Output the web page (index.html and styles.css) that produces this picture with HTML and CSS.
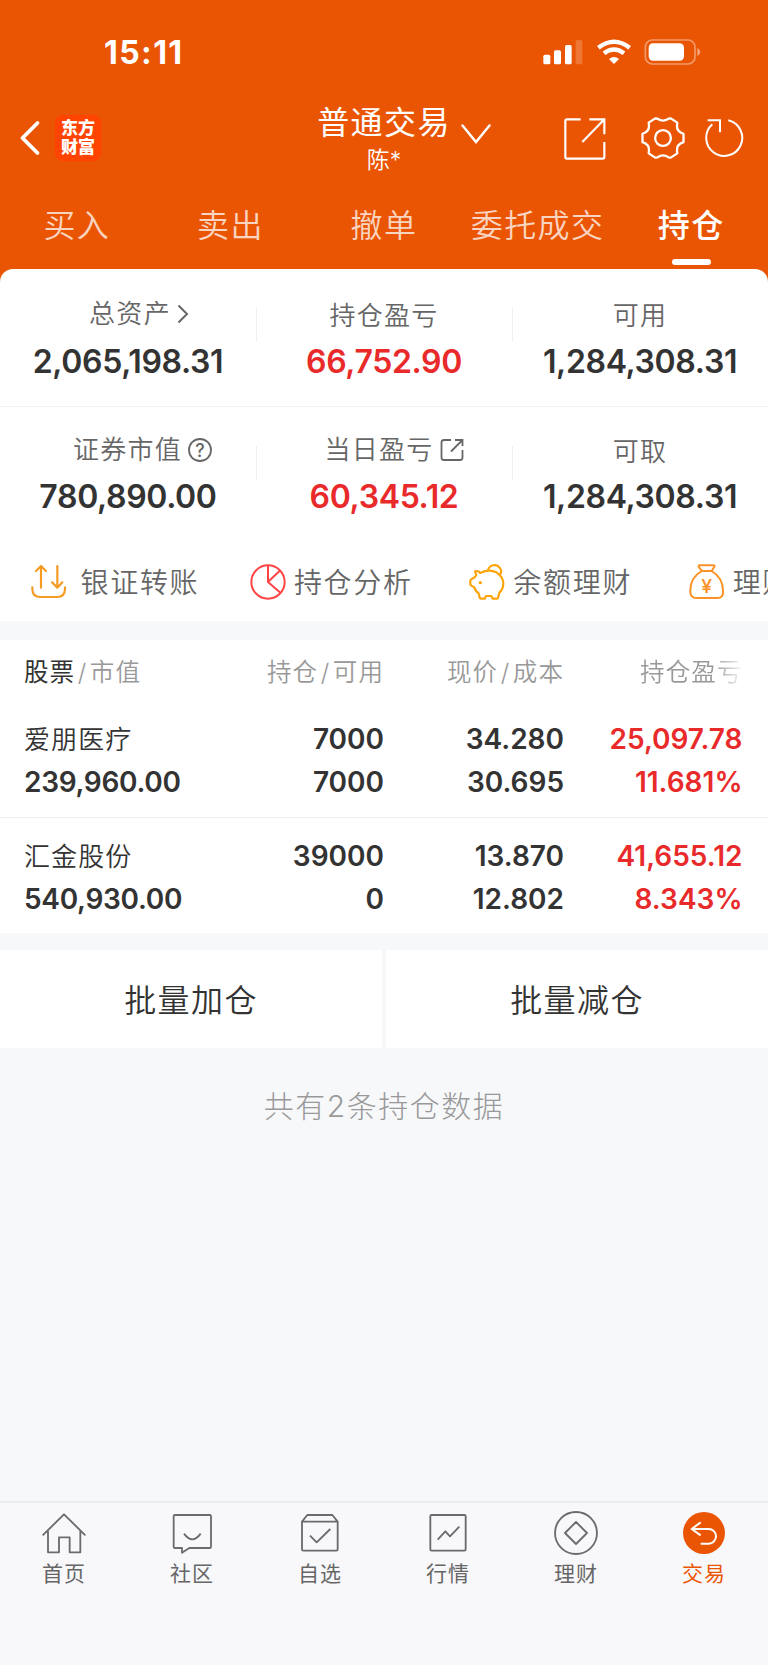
FILE: index.html
```
<!DOCTYPE html>
<html lang="zh-CN">
<head>
    <meta charset="UTF-8">
    <meta name="viewport" content="width=device-width, initial-scale=1.0">
    <title>普通交易 - 持仓</title>
    <link rel="stylesheet" href="styles.css">
</head>
<body>
    <div class="top">
        <!-- status bar -->
        <div class="status">
            <span class="time">15:11</span>
            <div class="status-icons">
                <svg width="40" height="26" viewBox="0 0 120 78" fill="#fff">
                    <rect x="1" y="47" width="21" height="29" rx="5"/>
                    <rect x="33" y="34" width="21" height="42" rx="5"/>
                    <rect x="66" y="18" width="20" height="58" rx="5"/>
                    <rect x="98" y="3" width="20" height="73" rx="5" opacity=".2"/>
                </svg>
                <svg class="wifi" width="36" height="26" viewBox="0 0 108 78" fill="none" stroke="#fff" stroke-width="13">
                    <path d="M7 26Q54 -10 101 26"/>
                    <path d="M24 43Q54 20 84 43"/>
                    <path d="M39 60Q54 48 69 60L54 75Z" fill="#fff" stroke="none"/>
                </svg>
                <svg class="battery" width="57" height="26" viewBox="0 0 171 78">
                    <rect x="4" y="3" width="149" height="72" rx="21" fill="none" stroke="#fff" stroke-width="5" opacity=".4"/>
                    <rect x="14" y="13" width="106" height="52" rx="13" fill="#fff"/>
                    <path d="M160 26Q169 31 169 39T160 52Z" fill="#fff" opacity=".45"/>
                </svg>
            </div>
        </div>

        <!-- title bar -->
        <div class="navbar">
            <svg class="back" width="22" height="36" viewBox="0 0 22 36" fill="none" stroke="#fff" stroke-width="3.8" stroke-linecap="round" stroke-linejoin="round">
                <path d="M18.500 3L3.500 18L18.500 33"/>
            </svg>
            <div class="logo">东方<br>财富</div>
            <div class="title">
                <div class="title-main">普通交易</div>
                <div class="title-sub">陈*</div>
            </div>
            <svg class="down" width="30" height="20" viewBox="0 0 30 20" fill="none" stroke="#fff" stroke-width="2.400" stroke-linecap="round">
                <path d="M1.500 1.500L15 18L28.500 1.500"/>
            </svg>
            <div class="nav-icons">
                <svg width="44" height="44" viewBox="0 0 132 132" fill="none" stroke="#fff" stroke-width="6.500">
                    <path d="M53 10H12Q7 10 7 15V123Q7 128 12 128H119Q124 128 124 123V78M124 55V10H79M122 12L58 78"/>
                </svg>
                <svg class="gear" width="44" height="44" viewBox="-22 -22 44 44" fill="none" stroke="#fff" stroke-width="2.300" stroke-linejoin="round">
                    <path d="M20.500 4.200Q13.500 6.500 14 12.500L14.300 15.400L7.800 19.600L5.500 19.300Q0 15.500 -5.500 19.300L-7.800 19.600L-14.300 15.400L-14 12.500Q-13.500 6.500 -20.500 4.200V-4.200Q-13.500 -6.500 -14 -12.500L-14.300 -15.400L-7.800 -19.600L-5.500 -19.300Q0 -15.500 5.500 -19.300L7.800 -19.600L14.300 -15.400L14 -12.500Q13.500 -6.500 20.500 -4.200Z"/>
                    <circle r="7.900"/>
                </svg>
                <svg class="refresh" width="44" height="44" viewBox="0 0 132 132" fill="none" stroke="#fff" stroke-width="6">
                    <path d="M79 13A54 54 0 1 1 31 25"/>
                    <path d="M17 13H54V49"/>
                </svg>
            </div>
        </div>

        <div class="tabs">
            <div class="tab">买入</div>
            <div class="tab">卖出</div>
            <div class="tab">撤单</div>
            <div class="tab">委托成交</div>
            <div class="tab active">持仓</div>
        </div>

        <!-- assets -->
        <div class="assets">
            <div class="asset-row">
                <div class="asset">
                    <div class="label with-icon total">总资产<svg width="12" height="20" viewBox="0 0 12 20" fill="none" stroke="#666" stroke-width="2"><path d="M1.500 1.500L10 10L1.500 18.500"/></svg></div>
                    <div class="value">2,065,198.31</div>
                </div>
                <div class="asset">
                    <div class="label">持仓盈亏</div>
                    <div class="value red">66,752.90</div>
                </div>
                <div class="asset">
                    <div class="label">可用</div>
                    <div class="value">1,284,308.31</div>
                </div>
            </div>
            <div class="asset-row second">
                <div class="asset">
                    <div class="label with-icon market">证券市值<svg width="24" height="24" viewBox="0 0 24 24"><circle cx="12" cy="12" r="11" fill="none" stroke="#666" stroke-width="1.800"/><text class="qmark" x="12" y="18.500">?</text></svg></div>
                    <div class="value">780,890.00</div>
                </div>
                <div class="asset">
                    <div class="label with-icon daily">当日盈亏<svg width="24" height="24" viewBox="0 0 24 24" fill="none" stroke="#666" stroke-width="1.800"><path d="M11 2H4Q1.500 2 1.500 4.500V19.500Q1.500 22 4 22H20Q22.500 22 22.500 19.500V12M15 2H22.500V8M22 2.500L11 13.500"/></svg></div>
                    <div class="value red">60,345.12</div>
                </div>
                <div class="asset">
                    <div class="label">可取</div>
                    <div class="value">1,284,308.31</div>
                </div>
            </div>
            <div class="actions">
                <div class="action transfer">
                    <svg width="36" height="36" viewBox="0 0 108 108" fill="none" stroke="#f59a23" stroke-width="6.500" stroke-linecap="round" stroke-linejoin="round">
                        <path d="M30 71V6M15 21L30 6L45 21M79 6V70M63 55L79 71L94 55M4 70V74Q4 99 28 99H78Q102 99 102 74V70"/>
                    </svg>
                    <span>银证转账</span>
                </div>
                <div class="action">
                    <svg width="36" height="36" viewBox="0 0 108 108" fill="none" stroke="#ff4446" stroke-width="6" stroke-linejoin="round">
                        <circle cx="54" cy="54" r="50"/>
                        <path d="M54 4V54L91 19M54 54L93 88"/>
                    </svg>
                    <span>持仓分析</span>
                </div>
                <div class="action">
                    <svg width="36" height="36" viewBox="0 0 108 108" fill="none" stroke="#ffa408" stroke-width="6.500" stroke-linejoin="round">
                        <path d="M57 20C60 2 82 -2 92 11C99 20 96 29 91 34"/>
                        <path d="M18 22Q29 20 34 27Q60 14 82 25Q103 38 103 59Q102 77 91 86L87 102Q86 104 83 104H71L67 96H51L47 104H36Q33 104 32 101L29 88Q20 83 16 70L7 65Q4 63 4 60V50Q4 47 7 46L18 39L22 33Z"/>
                        <circle cx="34" cy="56" r="5" fill="#ffa408" stroke="none"/>
                    </svg>
                    <span>余额理财</span>
                </div>
                <div class="action">
                    <svg width="36" height="36" viewBox="0 0 108 108" fill="none" stroke="#fb9226" stroke-width="6" stroke-linejoin="round">
                        <path d="M32 4H74Q78 4 76 8L68 21H38L29 8Q28 4 32 4ZM38 21C10 37 3 60 4 85Q5 102 22 102H86Q102 102 102 85C103 60 95 37 68 21"/>
                        <text class="yen" x="53" y="87">¥</text>
                    </svg>
                    <span>理财</span>
                </div>
            </div>
        </div>
    </div>

    <!-- positions -->
    <div class="positions">
        <div class="grid-row head">
            <div><b>股票</b><i>/</i>市值</div>
            <div>持仓<i>/</i>可用</div>
            <div>现价<i>/</i>成本</div>
            <div class="fade">持仓盈亏</div>
        </div>
        <div class="grid-row stock">
            <div><span class="name">爱朋医疗</span>239,960.00</div>
            <div>7000<br>7000</div>
            <div>34.280<br>30.695</div>
            <div class="red">25,097.78<br>11.681%</div>
        </div>
        <div class="grid-row stock last">
            <div><span class="name">汇金股份</span>540,930.00</div>
            <div>39000<br>0</div>
            <div>13.870<br>12.802</div>
            <div class="red">41,655.12<br>8.343%</div>
        </div>
    </div>

    <div class="batch">
        <div class="batch-btn">批量加仓</div>
        <div class="batch-btn">批量减仓</div>
    </div>
    <div class="summary">共有2条持仓数据</div>

    <!-- bottom tabbar -->
    <div class="tabbar">
        <div class="tabbar-item">
            <svg width="44" height="44" viewBox="0 0 132 132"><path d="M2 73L66 10L130 73M18 60V124H51V79H83V124H115V60"/></svg>
            <span>首页</span>
        </div>
        <div class="tabbar-item">
            <svg width="44" height="44" viewBox="0 0 132 132"><path d="M36 111H15Q11 111 11 107V16Q11 12 15 12H119Q123 12 123 16V107Q123 111 119 111H58L36 125ZM42 68Q67 102 92 68"/></svg>
            <span>社区</span>
        </div>
        <div class="tabbar-item">
            <svg width="44" height="44" viewBox="0 0 132 132"><path d="M12 32L28 12H103L119 32V115Q119 119 115 119H16Q12 119 12 115ZM12 32H119M36 74L56 94L97 54"/></svg>
            <span>自选</span>
        </div>
        <div class="tabbar-item">
            <svg width="44" height="44" viewBox="0 0 132 132"><rect x="13" y="12" width="106" height="107" rx="4"/><path d="M35 86L58 61L72 76L100 47"/></svg>
            <span>行情</span>
        </div>
        <div class="tabbar-item">
            <svg width="44" height="44" viewBox="0 0 132 132"><circle cx="66" cy="66" r="63"/><path d="M66 33L99 66L66 99L33 66Z"/></svg>
            <span>理财</span>
        </div>
        <div class="tabbar-item current">
            <svg width="44" height="44" viewBox="0 0 132 132"><circle class="disc" cx="66" cy="66" r="63"/><path d="M56 34L29 54L56 73M29 54H80A22 22 0 0 1 80 98H56"/></svg>
            <span>交易</span>
        </div>
    </div>
</body>
</html>
```
FILE: styles.css
```
* {
    box-sizing: border-box;
}
body {
    margin: 0;
    width: 768px;
    height: 1665px;
    display: flex;
    flex-direction: column;
    overflow: hidden;
    background-color: #f7f8fa;
    color: #333;
    font-family: Inter, "Noto Sans CJK SC", sans-serif;
}
svg {
    display: block;
    flex: none;
}
.red {
    color: #e92a2b;
}
.top {
    background-color: #ea5504;
}

/* status bar */
.status {
    display: flex;
    justify-content: space-between;
    height: 96px;
    padding: 33px 67px 0 104px;
    color: #fff;
}
.time {
    font-size: 32px;
    font-weight: 750;
    letter-spacing: 1.4px;
    line-height: 40px;
}
.status-icons {
    display: flex;
    margin-top: 6px;
}
.wifi {
    margin-left: 13px;
}
.battery {
    margin-left: 12px;
}

/* title bar */
.navbar {
    display: flex;
    align-items: center;
    height: 84px;
    padding: 0 22px 0 19px;
    color: #fff;
}
.logo {
    width: 46px;
    height: 46px;
    margin-left: 14px;
    padding-top: 4px;
    border-radius: 8px;
    background-color: #ff4300;
    font-size: 17px;
    font-weight: 900;
    line-height: 19px;
    text-align: center;
}
.title {
    width: 134px;
    margin-left: 216px;
    padding-top: 2px;
    text-align: center;
}
.title-main {
    font-size: 32px;
    letter-spacing: 1.4px;
    line-height: 40px;
    white-space: nowrap;
}
.title-sub {
    margin-top: 2px;
    font-size: 23px;
    font-weight: 350;
    line-height: 30px;
}
.down {
    margin-left: 10px;
    margin-top: -8px;
}
.nav-icons {
    display: flex;
    margin-left: auto;
}
.gear {
    margin-left: 34px;
}
.refresh {
    margin-left: 17px;
}

.tabs {
    display: flex;
    height: 89px;
    padding-top: 21px;
}
.tab {
    flex: 1;
    color: rgba(255, 255, 255, 0.75);
    font-size: 32px;
    font-weight: 350;
    letter-spacing: 1.4px;
    line-height: 50px;
    text-align: center;
    white-space: nowrap;
}
.tab.active {
    color: #fff;
    font-weight: 500;
}
.tab.active::after {
    content: "";
    display: block;
    width: 39px;
    height: 6px;
    margin: 8px auto 0;
    border-radius: 3px;
    background-color: #fff;
}

/* assets */
.assets {
    border-radius: 13px 13px 0 0;
    background-color: #fff;
}
.asset-row {
    display: flex;
    height: 138px;
    border-bottom: 1px solid #f2f2f4;
}
.asset {
    flex: 1;
    padding-top: 29px;
    text-align: center;
}
.asset + .asset {
    background: linear-gradient(#f0f0f2, #f0f0f2) no-repeat 0 39px / 1px 34px;
}
.asset-row.second {
    height: 136px;
    border-bottom: none;
}
.second .asset {
    padding-top: 27px;
}
.label {
    height: 36px;
    margin-bottom: 8px;
    color: #666;
    font-size: 26px;
    font-weight: 350;
    letter-spacing: 1.3px;
    line-height: 36px;
}
.label.with-icon {
    display: flex;
    align-items: center;
    justify-content: center;
    margin-top: -2px;
    margin-bottom: 10px;
}
.total {
    padding-left: 22px;
}
.total svg {
    margin-left: 6px;
}
.market {
    padding-left: 29px;
}
.market svg {
    margin-left: 6px;
}
.daily {
    padding-left: 20px;
}
.daily svg {
    margin-left: 6px;
}
.qmark {
    fill: #666;
    font-size: 18px;
    font-weight: 500;
    text-anchor: middle;
    letter-spacing: 0;
}
.value {
    font-size: 32px;
    font-weight: 600;
    letter-spacing: -0.35px;
    line-height: 40px;
}
.second .label {
    margin-bottom: 7px;
}
.second .label.with-icon {
    margin-bottom: 9px;
}

.actions {
    display: flex;
    height: 78px;
    overflow: hidden;
}
.action {
    display: flex;
    flex: 0 0 219.4px;
    align-items: center;
    padding-left: 30.5px;
    color: #666;
    font-size: 28px;
    font-weight: 350;
    letter-spacing: 1.7px;
    white-space: nowrap;
}
.action span {
    margin-left: 8px;
    padding-bottom: 2px;
}
.action.transfer span {
    margin-left: 14px;
}
.yen {
    fill: #fb9226;
    stroke: none;
    font-size: 58px;
    font-weight: 500;
    text-anchor: middle;
    letter-spacing: 0;
}

/* positions */
.positions {
    margin-top: 19px;
    background-color: #fff;
}
.grid-row {
    display: grid;
    grid-template-columns: 200px 160px 180px 178.5px;
    padding-left: 24px;
    text-align: right;
}
.grid-row > div:first-child {
    text-align: left;
}
.head {
    height: 77px;
    padding-top: 12px;
    color: #999;
    font-size: 24.500px;
    font-weight: 350;
    letter-spacing: 1.1px;
    line-height: 40px;
}
.head b {
    color: #333;
    font-weight: 400;
}
.head i {
    margin: 0 2.500px;
    font-style: normal;
}
.fade {
    -webkit-mask-image: linear-gradient(90deg, #000 84%, transparent 101%);
    mask-image: linear-gradient(90deg, #000 84%, transparent 101%);
}
.stock {
    height: 101px;
    padding-top: 1px;
    border-bottom: 1px solid #f0f0f2;
    font-size: 28px;
    font-weight: 600;
    line-height: 43px;
}
.stock > div:first-child {
    letter-spacing: -0.3px;
}
.stock.last {
    height: 115px;
    padding-top: 17px;
    border-bottom: none;
}
.name {
    display: block;
    font-size: 26px;
    font-weight: 350;
    letter-spacing: 1.1px;
}

.batch {
    display: flex;
    gap: 4px;
    margin-top: 17px;
}
.batch-btn {
    flex: 1;
    height: 98px;
    background-color: #fff;
    font-size: 32px;
    font-weight: 350;
    letter-spacing: 1.4px;
    line-height: 101px;
    text-align: center;
}
.summary {
    margin-top: 38px;
    color: #999;
    font-size: 30px;
    font-weight: 300;
    letter-spacing: 1.5px;
    line-height: 40px;
    text-align: center;
}

/* bottom tabbar */
.tabbar {
    display: flex;
    height: 164px;
    margin-top: auto;
    padding-top: 8px;
    border-top: 2px solid #ebecee;
    background-color: #f8f8fb;
}
.tabbar-item {
    display: flex;
    flex: 1;
    flex-direction: column;
    align-items: center;
    color: #666;
    font-size: 21px;
    letter-spacing: 1px;
    line-height: 28px;
}
.tabbar-item svg {
    margin-bottom: 5px;
    fill: none;
    stroke: #6b6b6d;
    stroke-width: 5.500px;
    stroke-linejoin: round;
}
.tabbar-item.current {
    color: #ea5504;
}
.tabbar-item.current svg {
    stroke: #fff;
    stroke-width: 6px;
}
.disc {
    fill: #ea5504;
    stroke: none;
}
```
